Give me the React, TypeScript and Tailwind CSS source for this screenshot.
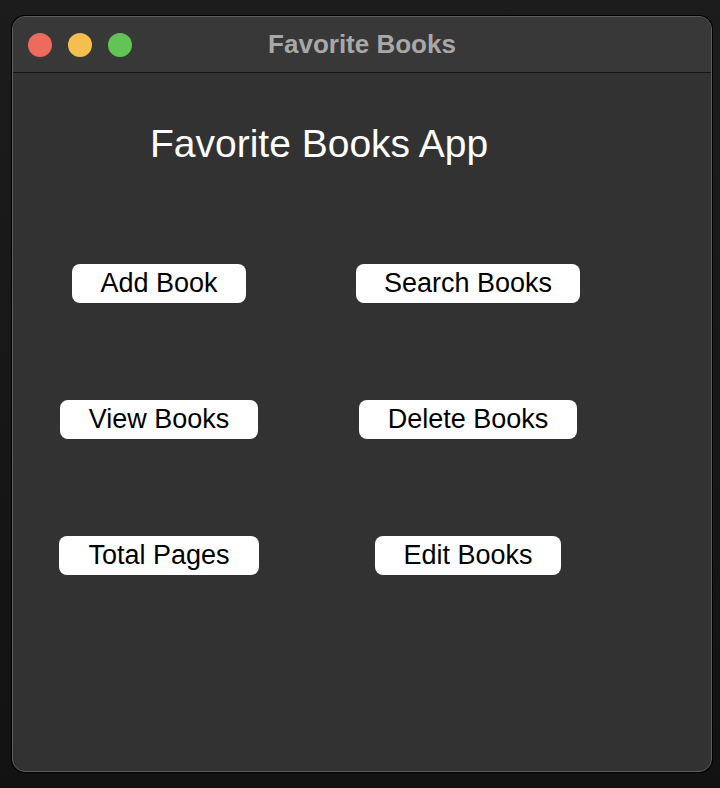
import React from "react"

const font = { fontFamily: '"Liberation Sans", Arial, sans-serif' }

const rows = [
  [
    { label: "Add Book", w: "w-[174px]" },
    { label: "Search Books", w: "w-[224px]" },
  ],
  [
    { label: "View Books", w: "w-[198px]" },
    { label: "Delete Books", w: "w-[218px]" },
  ],
  [
    { label: "Total Pages", w: "w-[200px]" },
    { label: "Edit Books", w: "w-[186px]" },
  ],
]

export default function App() {
  return (
    <div
      className="w-[720px] h-[788px] bg-gradient-to-b from-[#1c1c1c] to-[#121212] pt-[16px] pl-[12px]"
      style={font}
    >
      <div className="w-[700px] h-[756px] rounded-[13px] bg-[#323232] border border-[#5e5e5e] shadow-[0_0_0_1px_#000] overflow-hidden flex flex-col">
        {/* title bar */}
        <div className="relative h-[56px] shrink-0 bg-[#383838] border-b border-[#161616] flex items-center">
          <div className="flex gap-[16px] pl-[15px] pt-[1px]">
            <span className="w-[24px] h-[24px] rounded-full bg-[#ee6a5f]" />
            <span className="w-[24px] h-[24px] rounded-full bg-[#f5bf4f]" />
            <span className="w-[24px] h-[24px] rounded-full bg-[#61c454]" />
          </div>
          <div className="absolute inset-x-0 top-0 h-full flex items-center justify-center text-[26px] font-bold text-[#a8a8a8]">
            Favorite Books
          </div>
        </div>

        {/* content */}
        <div className="pl-[35px]">
          <div className="pl-[102px] pt-[47px] text-[39px] leading-[48px] text-white">
            Favorite Books App
          </div>
          <div className="grid grid-cols-[222px_224px] gap-x-[86px] gap-y-[97px] pt-[96px]">
            {rows.flat().map((b) => (
              <div key={b.label} className="flex justify-center">
                <button
                  className={`${b.w} h-[39px] rounded-[8px] bg-white text-black text-[27px] leading-none`}
                >
                  {b.label}
                </button>
              </div>
            ))}
          </div>
        </div>
      </div>
    </div>
  )
}
